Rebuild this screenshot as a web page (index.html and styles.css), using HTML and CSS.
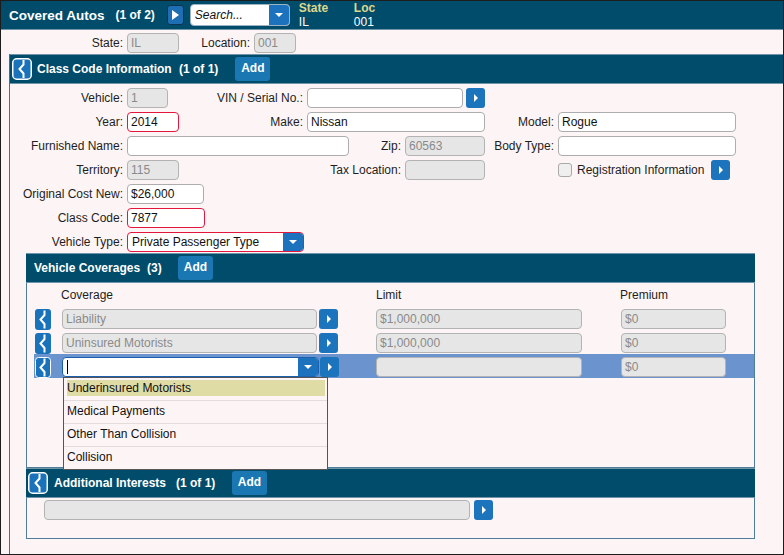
FILE: index.html
```html
<!DOCTYPE html>
<html>
<head>
<meta charset="utf-8">
<link rel="stylesheet" href="styles.css">
</head>
<body>
<div class="window">
  <header class="topbar">
    <span class="title">Covered Autos</span>
    <span class="count">(1 of 2)</span>
    <span class="play"><svg viewBox="0 0 17 20" width="17" height="20"><path d="M5 5 L12 10 L5 15 Z" fill="#fff"/></svg></span>
    <div class="search"><span class="search-text">Search...</span><span class="dd"><svg viewBox="0 0 20 22" width="20" height="22"><path d="M6 9 L14 9 L10 13 Z" fill="#fff"/></svg></span></div>
    <div class="kv kv-state"><span class="k">State</span><span class="v">IL</span></div>
    <div class="kv"><span class="k">Loc</span><span class="v">001</span></div>
  </header>

  <div class="locrow">
    <span class="lbl w126">State:</span><span class="field dis w52">IL</span>
    <span class="lbl w75">Location:</span><span class="field dis w42">001</span>
  </div>

  <div class="panel">
    <div class="sec-head">
      <svg class="hico" viewBox="0 0 20 22" width="20" height="22"><rect x="0.75" y="0.75" width="18.5" height="20.5" rx="4" fill="#1a72bb" stroke="#fff" stroke-width="1.5"/><path d="M11.5 2 V6.5 L7.5 11 L11.5 15.5 V20" fill="none" stroke="#fff" stroke-width="2"/></svg>
      <span class="h-text">Class Code Information</span>
      <span class="h-count">(1 of 1)</span>
      <span class="add add-cc">Add</span>
    </div>

    <div class="form">
      <div class="row">
        <span class="lbl w117">Vehicle:</span><span class="field dis w41">1</span>
        <span class="lbl w139">VIN / Serial No.:</span><span class="field w156"></span>
        <span class="abtn ml3"><svg viewBox="0 0 19 20" width="19" height="20"><path d="M8 6 L12 10 L8 14 Z" fill="#fff"/></svg></span>
      </div>
      <div class="row">
        <span class="lbl w117">Year:</span><span class="field req w52">2014</span>
        <span class="lbl w128">Make:</span><span class="field w178">Nissan</span>
        <span class="lbl w73">Model:</span><span class="field w178">Rogue</span>
      </div>
      <div class="row">
        <span class="lbl w117">Furnished Name:</span><span class="field w222"></span>
        <span class="lbl w56">Zip:</span><span class="field dis w80">60563</span>
        <span class="lbl w73">Body Type:</span><span class="field w178"></span>
      </div>
      <div class="row">
        <span class="lbl w117">Territory:</span><span class="field dis w52">115</span>
        <span class="lbl w226">Tax Location:</span><span class="field dis w80"></span>
        <span class="check"></span><span class="check-text">Registration Information</span>
        <span class="abtn ml4"><svg viewBox="0 0 19 20" width="19" height="20"><path d="M8 6 L12 10 L8 14 Z" fill="#fff"/></svg></span>
      </div>
      <div class="row">
        <span class="lbl w117">Original Cost New:</span><span class="field w77">$26,000</span>
      </div>
      <div class="row">
        <span class="lbl w117">Class Code:</span><span class="field req w78">7877</span>
      </div>
      <div class="row">
        <span class="lbl w117">Vehicle Type:</span>
        <span class="field req select w177"><span class="sel-text">Private Passenger Type</span><span class="dd"><svg viewBox="0 0 20 20" width="20" height="20"><path d="M6 8 L14 8 L10 12 Z" fill="#fff"/></svg></span></span>
      </div>
    </div>

    <div class="sub">
      <div class="sub-head">
        <span class="h-text">Vehicle Coverages</span>
        <span class="h-count c3">(3)</span>
        <span class="add add-vc">Add</span>
      </div>
      <div class="cov-body">
        <div class="cov-cols">
          <span class="col-cov">Coverage</span><span class="col-lim">Limit</span><span class="col-prem">Premium</span>
        </div>
        <div class="cov-row">
          <svg class="rico" viewBox="0 0 16 21" width="16" height="21"><rect x="0" y="0" width="16" height="21" rx="3" fill="#1a72bb"/><path d="M9.5 1.5 V6 L5.5 10.5 L9.5 15 V19.5" fill="none" stroke="#fff" stroke-width="2"/></svg>
          <span class="field dis w255 ml11">Liability</span>
          <span class="abtn ml2"><svg viewBox="0 0 19 20" width="19" height="20"><path d="M8 6 L12 10 L8 14 Z" fill="#fff"/></svg></span>
          <span class="field dis w206 ml38">$1,000,000</span>
          <span class="field dis w105 ml39">$0</span>
        </div>
        <div class="cov-row">
          <svg class="rico" viewBox="0 0 16 21" width="16" height="21"><rect x="0" y="0" width="16" height="21" rx="3" fill="#1a72bb"/><path d="M9.5 1.5 V6 L5.5 10.5 L9.5 15 V19.5" fill="none" stroke="#fff" stroke-width="2"/></svg>
          <span class="field dis w255 ml11">Uninsured Motorists</span>
          <span class="abtn ml2"><svg viewBox="0 0 19 20" width="19" height="20"><path d="M8 6 L12 10 L8 14 Z" fill="#fff"/></svg></span>
          <span class="field dis w206 ml38">$1,000,000</span>
          <span class="field dis w105 ml39">$0</span>
        </div>
        <div class="cov-row sel-row">
          <svg class="rico" viewBox="0 0 16 21" width="16" height="21"><rect x="0.5" y="0.5" width="15" height="20" rx="3" fill="#1a72bb" stroke="#fff" stroke-width="1"/><path d="M9.5 1.5 V6 L5.5 10.5 L9.5 15 V19.5" fill="none" stroke="#fff" stroke-width="2"/></svg>
          <span class="field select active w257 ml11"><span class="sel-text"><span class="caret"></span></span><span class="dd"><svg viewBox="0 0 20 20" width="20" height="20"><path d="M6 8 L14 8 L10 12 Z" fill="#fff"/></svg></span></span>
          <span class="abtn ml1"><svg viewBox="0 0 19 20" width="19" height="20"><path d="M8 6 L12 10 L8 14 Z" fill="#fff"/></svg></span>
          <span class="field dis w206 ml37"></span>
          <span class="field dis w105 ml39">$0</span>
        </div>
        <ul class="dropdown">
          <li><span class="opt hl">Underinsured Motorists</span></li>
          <li><span class="opt">Medical Payments</span></li>
          <li><span class="opt">Other Than Collision</span></li>
          <li><span class="opt">Collision</span></li>
        </ul>
      </div>
      <div class="sub-head ai-head">
        <svg class="hico" viewBox="0 0 20 22" width="20" height="22"><rect x="0.75" y="0.75" width="18.5" height="20.5" rx="4" fill="#1a72bb" stroke="#fff" stroke-width="1.5"/><path d="M11.5 2 V6.5 L7.5 11 L11.5 15.5 V20" fill="none" stroke="#fff" stroke-width="2"/></svg>
        <span class="h-text">Additional Interests</span>
        <span class="h-count c-ai">(1 of 1)</span>
        <span class="add add-ai">Add</span>
      </div>
      <div class="ai-body">
        <span class="field dis w426"></span>
        <span class="abtn ml4"><svg viewBox="0 0 19 20" width="19" height="20"><path d="M8 6 L12 10 L8 14 Z" fill="#fff"/></svg></span>
      </div>
    </div>
  </div>
</div>
</body>
</html>
```

FILE: styles.css
```css
* { box-sizing: border-box; }
html, body { margin: 0; padding: 0; }
body {
  font-family: "Liberation Sans", Arial, sans-serif;
  font-size: 12px;
  color: #1e1e1e;
  background: #fdf5f5;
}
.window {
  width: 784px;
  height: 555px;
  border: 1px solid #1c1c1c;
  background: #fdf5f5;
  display: flex;
  flex-direction: column;
  overflow: hidden;
}

/* top bar */
.topbar {
  flex: none;
  height: 29px;
  background: #024c6b;
  border-bottom: 1px solid #6f95a9;
  display: flex;
  align-items: center;
  padding-left: 8px;
  color: #fff;
}
.title { font-weight: bold; font-size: 13.5px; }
.count { font-weight: bold; margin-left: 11px; }
.play {
  margin-left: 12px;
  width: 17px;
  height: 20px;
  background: #1d6eb3;
  border: 1px solid #0c3553;
  border-radius: 3px;
  display: flex;
  align-items: center;
  justify-content: center;
  overflow: hidden;
}
.play svg { flex: none; }
.search {
  margin-left: 6px;
  width: 100px;
  height: 22px;
  background: #fff;
  border: 1px solid #9db3c4;
  border-radius: 4px;
  display: flex;
  overflow: hidden;
  color: #111;
}
.search-text {
  flex: 1;
  font-style: italic;
  line-height: 20px;
  padding-left: 4px;
}
.search .dd { width: 20px; background: #1c72bd; display: flex; align-items: center; justify-content: center; }
.kv {
  display: flex;
  flex-direction: column;
  margin-left: 9px;
  align-self: flex-start;
}
.kv-state { width: 55px; }
.kv + .kv { margin-left: 0; }
.k { font-weight: bold; color: #ddd68c; font-size: 12px; line-height: 14px; height: 14px; }
.v { color: #fff; font-size: 12px; line-height: 14px; height: 14px; }

/* location row */
.locrow {
  flex: none;
  height: 24px;
  display: flex;
  align-items: flex-start;
  padding-top: 3px;
}

/* labels and fields */
.lbl {
  flex: none;
  text-align: right;
  padding-right: 4px;
  line-height: 20px;
  white-space: nowrap;
}
.field {
  flex: none;
  display: block;
  height: 20px;
  line-height: 18px;
  border: 1px solid #adadad;
  border-radius: 4px;
  background: #fff;
  padding-left: 3px;
  color: #111;
  white-space: nowrap;
  overflow: hidden;
}
.field.dis { background: #e6e6e6; color: #8a8a8a; border-color: #b3b3b3; }
.field.req { border-color: #e3173c; }
.field.select { display: flex; padding-left: 0; }
.sel-text { flex: 1; padding-left: 4px; display: flex; align-items: center; }
.select .dd { width: 20px; background: #1c72bd; display: flex; align-items: center; justify-content: center; }
.field.active { border-color: #1c5fae; }
.caret { display: block; width: 1px; height: 14px; background: #000; }

.w41 { width: 41px; } .w42 { width: 42px; } .w52 { width: 52px; } .w56 { width: 56px; }
.w73 { width: 73px; } .w75 { width: 75px; } .w77 { width: 77px; } .w78 { width: 78px; }
.w80 { width: 80px; } .w105 { width: 105px; } .w117 { width: 117px; } .w126 { width: 126px; }
.w128 { width: 128px; } .w139 { width: 139px; } .w156 { width: 156px; } .w177 { width: 177px; }
.w178 { width: 178px; } .w206 { width: 206px; } .w222 { width: 222px; } .w226 { width: 226px; }
.w255 { width: 255px; } .w257 { width: 257px; } .w426 { width: 426px; }
.ml1 { margin-left: 1px; } .ml2 { margin-left: 2px; } .ml3 { margin-left: 3px; } .ml4 { margin-left: 4px; }
.ml11 { margin-left: 11px; } .ml37 { margin-left: 37px; } .ml38 { margin-left: 38px; } .ml39 { margin-left: 39px; }

.abtn {
  flex: none;
  width: 19px;
  height: 20px;
  background: #1c74bc;
  border-radius: 3px;
  display: flex;
  overflow: hidden;
}

/* panel */
.panel {
  flex: 1;
  margin-left: 8px;
  border-left: 1px solid #55697a;
  display: flex;
  flex-direction: column;
}
.sec-head, .sub-head {
  flex: none;
  height: 30px;
  background: #024c6b;
  border-top: 1px solid #6f95a9;
  border-bottom: 1px solid #6f95a9;
  display: flex;
  align-items: center;
  color: #fff;
  font-weight: bold;
}
.sec-head { padding-left: 2px; }
.hico { flex: none; }
.sec-head .h-text { margin-left: 5px; width: 142px; }
.h-count { font-weight: bold; }
.add {
  background: #1b77b1;
  border-radius: 3px;
  height: 24px;
  line-height: 22px;
  text-align: center;
  width: 35px;
  font-weight: bold;
  color: #fff;
}
.add-cc { margin-left: 17px; }

/* form */
.form {
  flex: none;
  padding-top: 4px;
  display: flex;
  flex-direction: column;
  gap: 4px;
}
.row {
  display: flex;
  align-items: flex-start;
  height: 20px;
}
.check {
  flex: none;
  margin-left: 73px;
  margin-top: 3px;
  width: 14px;
  height: 14px;
  border: 1px solid #a9a9a9;
  border-radius: 3px;
  background: #efefef;
}
.check-text { margin-left: 5px; line-height: 20px; width: 130px; white-space: nowrap; }

/* sub sections */
.sub {
  margin: 1px 0 0 16px;
  width: 729px;
  display: flex;
  flex-direction: column;
}
.sub-head { padding-left: 8px; }
.sub-head .h-text { width: 113px; }
.c3 { width: 31px; }
.cov-body {
  position: relative;
  height: 185px;
  border: 1px solid #4f7c98;
  border-top: none;
}
.cov-cols {
  height: 23px;
  display: flex;
  align-items: center;
  padding-left: 34px;
  padding-top: 1px;
}
.col-cov { width: 315px; }
.col-lim { width: 244px; }
.cov-row {
  margin-left: 7px;
  height: 24px;
  display: flex;
  align-items: flex-start;
  padding-top: 3px;
}
.rico { flex: none; margin-left: 1px; }
.sel-row { background: #6b93cd; }

.dropdown {
  position: absolute;
  left: 36px;
  top: 94px;
  width: 265px;
  margin: 0;
  padding: 0;
  list-style: none;
  background: #fdf5f5;
  border: 1px solid #555;
  z-index: 5;
}
.dropdown li {
  height: 23px;
  padding: 2px 2px 0 3px;
  border-bottom: 1px solid #e4dcdc;
}
.dropdown li:last-child { border-bottom: none; height: 22px; }
.opt { display: block; height: 16px; line-height: 16px; color: #111; }
.opt.hl { background: #dfdca6; }

.ai-head { padding-left: 2px; }
.ai-head .h-text { margin-left: 6px; width: 122px; }
.c-ai { width: 56px; }
.ai-body {
  height: 41px;
  border: 1px solid #4f7c98;
  border-top: none;
  display: flex;
  align-items: flex-start;
  padding: 2px 0 0 17px;
}
```
